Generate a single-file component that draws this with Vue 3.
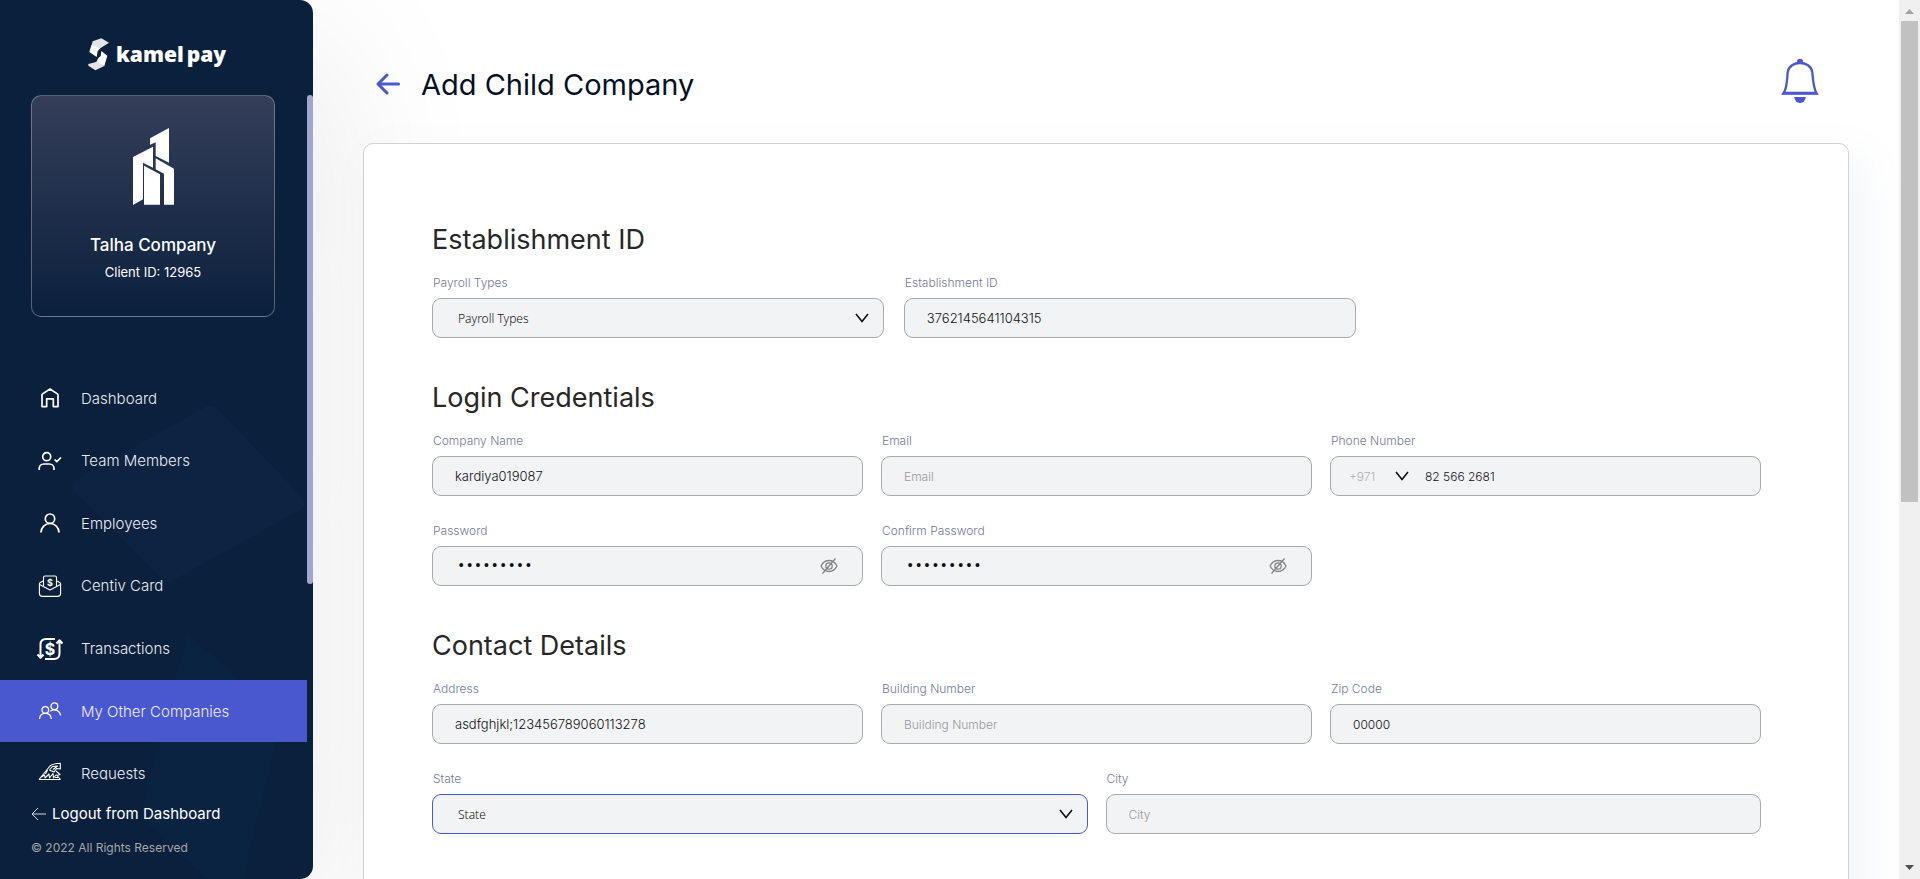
<script setup>
import { ref } from 'vue'

const navItems = [
  { label: 'Dashboard', icon: 'home' },
  { label: 'Team Members', icon: 'team' },
  { label: 'Employees', icon: 'person' },
  { label: 'Centiv Card', icon: 'card' },
  { label: 'Transactions', icon: 'transfer' },
  { label: 'My Other Companies', icon: 'companies', active: true },
  { label: 'Requests', icon: 'requests' },
]

const sections = ref([
  {
    title: 'Establishment ID',
    rows: [
      {
        layout: 'short',
        fields: [
          { id: 'payroll', label: 'Payroll Types', type: 'select' },
          { id: 'establishment', label: 'Establishment ID', type: 'text', value: '3762145641104315' },
        ],
      },
    ],
  },
  {
    title: 'Login Credentials',
    rows: [
      {
        layout: 'thirds',
        fields: [
          { id: 'company', label: 'Company Name', type: 'text', value: 'kardiya019087' },
          { id: 'email', label: 'Email', type: 'text', value: '', placeholder: 'Email' },
          { id: 'phone', label: 'Phone Number', type: 'phone', value: '82 566 2681' },
        ],
      },
      {
        layout: 'thirds',
        fields: [
          { id: 'password', label: 'Password', type: 'password', value: 'secret123' },
          { id: 'confirm', label: 'Confirm Password', type: 'password', value: 'secret123' },
        ],
      },
    ],
  },
  {
    title: 'Contact Details',
    rows: [
      {
        layout: 'thirds',
        fields: [
          { id: 'address', label: 'Address', type: 'text', value: 'asdfghjkl;123456789060113278' },
          { id: 'building', label: 'Building Number', type: 'text', value: '', placeholder: 'Building Number' },
          { id: 'zip', label: 'Zip Code', type: 'text', value: '00000', compact: true },
        ],
      },
      {
        layout: 'halves',
        fields: [
          { id: 'state', label: 'State', type: 'select', focused: true },
          { id: 'city', label: 'City', type: 'text', value: '', placeholder: 'City' },
        ],
      },
    ],
  },
])
</script>

<template>
  <div class="page">
    <aside class="sidebar">
      <svg class="backdrop" viewBox="0 0 313 879" preserveAspectRatio="none" aria-hidden="true">
        <path d="M205 407 Q212 403 218 409 L302 497 Q308 504 300 510 L172 581 Q166 584 161 578 L76 493 Q70 485 78 479Z" fill="#0e2341" />
        <path d="M187 634 L228 668 L280 730 L243 879 L207 879 L140 817Z" fill="#0a2341" />
      </svg>

      <a class="brand" href="#">
        <svg width="22" height="33" viewBox="0 0 66 99" aria-hidden="true">
          <path d="M14 10 L40 1 L63 14 L38 30 L10 24Z" fill="#e4e4e4" />
          <path d="M10 22 L38 29 L29 40 L26 57 L4 42Z" fill="#fff" />
          <path d="M40 39 L58 53 L49 84 L24 74 L31 60 L38 54Z" fill="#fff" />
          <path d="M24 72 L49 84 L22 97 L1 83 L1 78Z" fill="#e4e4e4" />
        </svg>
        <span class="brand-name"><span>kamel</span><span>pay</span></span>
      </a>

      <div class="scroller">
        <div class="scroll-content">
          <section class="company">
            <svg width="41" height="77" viewBox="399 384 123 231" fill="#fff" aria-hidden="true">
              <path d="M507 384V488L467 468V427L450 434V415Z" />
              <path d="M459 440V503L429 488V598L399 615V471Z" />
              <path d="M467 475L522 506V614H492V521L467 508Z" />
              <path d="M432 497L480 523V614H432Z" />
            </svg>
            <strong class="company-name">Talha Company</strong>
            <span class="company-id">Client ID: 12965</span>
          </section>

          <nav>
            <ul class="nav">
              <li v-for="item in navItems" :key="item.label">
                <a href="#" class="nav-link" :class="{ active: item.active }">
                  <span class="nav-icon">
                    <svg v-if="item.icon === 'home'" width="24" height="24" viewBox="0 0 24 24" class="line">
                      <path d="M4 9Q4 8.300 4.600 7.900L12 3L19.400 7.900Q20 8.300 20 9V20.600H15.300V12.800H8.700V20.600H4Z" />
                    </svg>
                    <svg v-else-if="item.icon === 'team'" width="24" height="24" viewBox="0 0 24 24" class="line">
                      <circle cx="8.700" cy="7.700" r="4" />
                      <path d="M1.200 21V19.500A4.500 4.500 0 0 1 5.700 15H11.500A4.500 4.500 0 0 1 16 19.500V21M16.600 10.500L18.800 12.700L23 8.500" />
                    </svg>
                    <svg v-else-if="item.icon === 'person'" width="24" height="24" viewBox="0 0 24 24" class="line">
                      <circle cx="12" cy="7.700" r="4.700" />
                      <path d="M3 21.500A9 9 0 0 1 21 21.500" />
                    </svg>
                    <svg v-else-if="item.icon === 'card'" width="24" height="24" viewBox="0 0 24 24" class="line thin">
                      <path d="M5.500 12V3.500Q5.500 2 7 2H17Q18.500 2 18.500 3.500V12" />
                      <path d="M5 7L2 8.800Q1.400 9.200 1.400 10V19.500Q1.400 22.400 4.500 22.400H19.500Q22.600 22.400 22.600 19.500V10Q22.600 9.200 22 8.800L19 7" />
                      <path d="M1.600 10.500L12 16L22.400 10.500" />
                      <text x="12" y="11.500" class="dollar small">$</text>
                    </svg>
                    <svg v-else-if="item.icon === 'transfer'" width="28" height="28" viewBox="0 0 28 28" class="line bold">
                      <path d="M19 4H10Q4.500 4 4.500 9.500V22M1.500 19.500L4.500 22.800L7.500 19.500M9 24H18Q23.500 24 23.500 18.500V6M20.500 8.500L23.500 5.200L26.500 8.500" />
                      <text x="14" y="19.500" class="dollar">$</text>
                    </svg>
                    <svg v-else-if="item.icon === 'companies'" width="24" height="24" viewBox="0 0 24 24" class="line medium">
                      <circle cx="7.300" cy="11" r="3.300" />
                      <path d="M1.500 20A5.900 5.900 0 0 1 13.300 20" />
                      <circle cx="16.400" cy="7.300" r="3.400" />
                      <path d="M12.300 12.200Q15.500 9.900 19 11.400Q22 13 22.700 16.400" />
                    </svg>
                    <svg v-else width="24" height="24" viewBox="0 0 24 24" class="line thin">
                      <path d="M1 17.500H22.500M1 17.500L12 4Q14.500 1.500 22.300 1.200V7L18.500 6.500L16 10L11.500 8L14.500 4.500L19.500 4L15 7.500M18 9L22 12.500L19 13.500L22.500 17.500M2.500 15.500L6.500 13L7 16L11 12L11.500 16L15 11.500L15.500 16L18.500 12.500M9.500 8L7.500 12M17 15.500L20 15.500" />
                    </svg>
                  </span>
                  <span>{{ item.label }}</span>
                </a>
              </li>
            </ul>
          </nav>
        </div>
        <div class="side-track"><div class="side-thumb"></div></div>
      </div>

      <footer class="side-footer">
        <a class="logout" href="#">
          <svg width="15" height="14" viewBox="0 0 15 14" aria-hidden="true">
            <path d="M15 7H1M7 1L1 7L7 13" fill="none" stroke="#d5d9e2" stroke-width="1" />
          </svg>
          Logout from Dashboard
        </a>
        <small class="copyright">© 2022 All Rights Reserved</small>
      </footer>
    </aside>

    <main class="main">
      <header class="header">
        <button class="icon-button" type="button" aria-label="Back">
          <svg width="24" height="22" viewBox="0 0 24 22">
            <path d="M22.500 11H2M11 2L2 11L11 20" fill="none" stroke="#4a58d0" stroke-width="3" stroke-linecap="round" stroke-linejoin="round" />
          </svg>
        </button>
        <h1>Add Child Company</h1>
        <button class="icon-button bell" type="button" aria-label="Notifications">
          <svg width="38" height="44" viewBox="243 177 114 132">
            <path d="M251 279C262 262 261 238 263 217C266 198 283 189 300 189C317 189 334 198 337 217C339 240 340 262 349 279Z" fill="none" stroke="#4a58d0" stroke-width="7" />
            <path d="M243 284L251 276H349L357 284Z" fill="#4a58d0" />
            <path d="M291 190V184A9 8 0 0 1 309 184V190Z" fill="#4a58d0" />
            <path d="M283 291H317A17 18 0 0 1 283 291Z" fill="#4a58d0" />
          </svg>
        </button>
      </header>

      <form class="panel" @submit.prevent>
        <section v-for="section in sections" :key="section.title" class="section">
          <h2>{{ section.title }}</h2>
          <div class="rows">
            <div v-for="(row, i) in section.rows" :key="i" class="row" :class="row.layout">
              <div v-for="field in row.fields" :key="field.id" class="field">
                <label :for="field.id">{{ field.label }}</label>

                <div v-if="field.type === 'select'" class="control" :class="{ focused: field.focused }">
                  <select :id="field.id">
                    <option>{{ field.label }}</option>
                  </select>
                  <svg class="chevron" width="14" height="10" viewBox="0 0 14 10" aria-hidden="true">
                    <path d="M1 1L7 8.500L13 1" />
                  </svg>
                </div>

                <div v-else-if="field.type === 'phone'" class="control">
                  <div class="prefix">
                    <select aria-label="Country code">
                      <option>+971</option>
                    </select>
                    <svg class="chevron" width="14" height="10" viewBox="0 0 14 10" aria-hidden="true">
                      <path d="M1 1L7 8.500L13 1" />
                    </svg>
                  </div>
                  <input :id="field.id" v-model="field.value" class="phone compact" type="tel" />
                </div>

                <div v-else-if="field.type === 'password'" class="control">
                  <input :id="field.id" v-model="field.value" class="secret" type="password" />
                  <button class="eye" type="button" aria-label="Show password">
                    <svg width="18" height="16" viewBox="0 0 18 16">
                      <path d="M1 8C3 4 6 2.500 9 2.500S15 4 17 8C15 12 12 13.500 9 13.500S3 12 1 8ZM15.500 0.500L2.500 15.500" />
                      <ellipse cx="9" cy="8" rx="3.200" ry="3.200" />
                    </svg>
                  </button>
                </div>

                <div v-else class="control">
                  <input
                    :id="field.id"
                    v-model="field.value"
                    type="text"
                    :class="{ compact: field.compact }"
                    :placeholder="field.placeholder"
                  />
                </div>
              </div>
            </div>
          </div>
        </section>
      </form>
    </main>

    <div class="page-track" aria-hidden="true">
      <svg width="9" height="5" viewBox="0 0 9 5"><path d="M0 5L4.500 0L9 5Z" fill="#a3a3a3" /></svg>
      <div class="page-rail"><div class="page-thumb"></div></div>
      <svg width="9" height="5" viewBox="0 0 9 5"><path d="M0 0L4.500 5L9 0Z" fill="#505050" /></svg>
    </div>
  </div>
</template>

<style>
body {
  margin: 0;
}
</style>

<style scoped>
* {
  box-sizing: border-box;
}

.page {
  display: flex;
  height: 100vh;
  overflow: hidden;
  background: #fff;
  font-family: Inter, 'Open Sans', sans-serif;
}

.sidebar {
  position: relative;
  display: flex;
  flex-direction: column;
  flex: none;
  width: 313px;
  border-radius: 0 13px 13px 0;
  background: #0b203d;
  color: #fff;
  box-shadow: 24px 42px 160px rgba(0, 0, 0, 0.08);
}

.backdrop {
  position: absolute;
  inset: 0;
  width: 100%;
  height: 100%;
}

.brand {
  position: relative;
  display: flex;
  align-items: center;
  gap: 6px;
  height: 95px;
  padding: 13px 0 0 88px;
  color: #fff;
  text-decoration: none;
}

.brand-name {
  display: flex;
  gap: 3px;
  font-family: 'Open Sans', sans-serif;
  font-size: 21px;
  font-weight: 800;
  line-height: 30px;
}

.scroller {
  position: relative;
  display: flex;
  flex: 1;
  min-height: 0;
}

.scroll-content {
  flex: 1;
  overflow: hidden;
}

.side-track {
  width: 6px;
}

.side-thumb {
  height: 71.400%;
  border-radius: 3px;
  background: #a2a6cf;
}

.company {
  display: flex;
  flex-direction: column;
  align-items: center;
  height: 222px;
  margin: 0 32px 0 31px;
  padding-top: 32px;
  border: 1px solid rgba(255, 255, 255, 0.3);
  border-radius: 10px;
  background: linear-gradient(#343e59, #0b203d);
}

.company-name {
  margin-top: 28px;
  font-size: 17px;
  font-weight: 500;
  line-height: 24px;
}

.company-id {
  margin-top: 5px;
  font-size: 13px;
  line-height: 20px;
}

.nav {
  display: grid;
  grid-auto-rows: 1fr;
  height: 438px;
  margin: 50px 0 0;
  padding: 0;
  list-style: none;
}

.nav-link {
  display: flex;
  align-items: center;
  gap: 17px;
  height: 100%;
  padding-left: 36px;
  color: #e9ecf2;
  font-size: 15px;
  font-weight: 300;
  text-decoration: none;
}

.nav-link.active {
  background: #4a58d0;
}

.nav-icon {
  display: flex;
  justify-content: center;
  width: 28px;
}

.line {
  fill: none;
  stroke: #fff;
  stroke-width: 1.700;
  stroke-linejoin: round;
}

.line.thin {
  stroke-width: 1.100;
}

.line.medium {
  stroke-width: 1.300;
}

.line.bold {
  stroke-width: 2;
}

.dollar {
  fill: #fff;
  stroke: none;
  font-size: 16px;
  font-weight: 700;
  text-anchor: middle;
}

.dollar.small {
  font-size: 9px;
}

.side-footer {
  position: relative;
  display: flex;
  flex-direction: column;
  gap: 12px;
  height: 99px;
  padding: 23px 31px 0;
}

.logout {
  display: flex;
  align-items: center;
  gap: 6px;
  color: #fff;
  font-size: 15px;
  line-height: 22px;
  text-decoration: none;
}

.copyright {
  color: #a4a7ac;
  font-size: 12px;
  line-height: 22px;
}

.main {
  position: relative;
  display: flex;
  flex-direction: column;
  flex: 1;
  min-width: 0;
  overflow: hidden;
  padding: 59px 50px 0;
}

.header {
  display: flex;
  flex: none;
  align-items: flex-start;
  height: 84px;
  padding: 0 30px 0 13px;
}

.icon-button {
  display: flex;
  align-items: center;
  height: 50px;
  padding: 0;
  border: 0;
  background: none;
}

.bell {
  height: 44px;
  margin-left: auto;
}

h1 {
  margin: 0 0 0 21px;
  color: #041027;
  font-size: 29px;
  font-weight: 400;
  line-height: 52px;
}

.panel {
  display: flex;
  flex: none;
  flex-direction: column;
  gap: 43px;
  padding: 79px 87px 80px 68px;
  border: 1px solid #d1d1d1;
  border-radius: 10px;
  background: #fff;
  box-shadow: 14px 17px 40px 4px rgba(112, 144, 176, 0.08);
}

h2 {
  margin: 0 0 15px;
  color: #272727;
  font-size: 27px;
  font-weight: 400;
  line-height: 34px;
}

.rows {
  display: grid;
  gap: 24px;
}

.row {
  display: grid;
  gap: 18px;
}

.short {
  grid-template-columns: 34% 34%;
  gap: 20px;
}

.thirds {
  grid-template-columns: repeat(3, 1fr);
}

.halves {
  grid-template-columns: repeat(2, 1fr);
}

label {
  display: block;
  margin-bottom: 4px;
  padding-left: 1px;
  color: #74799b;
  font-size: 12px;
  font-weight: 300;
  line-height: 22px;
}

.control {
  position: relative;
  display: flex;
  align-items: center;
  height: 40px;
  overflow: hidden;
  border: 1px solid #a9a9a9;
  border-radius: 9px;
  background: #f2f3f5;
}

.control.focused {
  border-color: #4a58d0;
}

input,
select {
  flex: 1;
  width: 100%;
  min-width: 0;
  height: 100%;
  margin: 0;
  padding: 0 22px;
  border: 0;
  outline: 0;
  background: none;
  color: #111;
  font-family: Inter, 'Open Sans', sans-serif;
  font-size: 13px;
  font-weight: 300;
}

input::placeholder {
  color: #999;
  font-size: 12px;
  opacity: 1;
}

input.compact {
  font-size: 12px;
}

select {
  padding: 0 40px 0 25px;
  appearance: none;
  font-family: 'Noto Sans', sans-serif;
  font-size: 12px;
}

.chevron {
  position: absolute;
  right: 14px;
  fill: none;
  stroke: #111;
  stroke-width: 1.600;
  pointer-events: none;
}

.prefix {
  position: relative;
  display: flex;
  align-items: center;
  width: 78px;
  height: 100%;
}

.prefix select {
  padding: 0 0 0 18px;
  color: #b0b0b0;
  font-family: Inter, 'Open Sans', sans-serif;
}

.prefix .chevron {
  right: 0;
}

input.phone {
  padding-left: 16px;
}

input.secret {
  padding-left: 24px;
  color: #111;
  font-family: 'Liberation Mono', monospace;
  font-size: 14px;
  font-weight: 400;
}

.eye {
  display: flex;
  padding: 0;
  margin-right: 24px;
  border: 0;
  background: none;
}

.eye svg {
  fill: none;
  stroke: #858585;
  stroke-width: 1.300;
}

.page-track {
  z-index: 1;
  display: flex;
  flex: none;
  flex-direction: column;
  align-items: center;
  gap: 7px;
  width: 21px;
  padding: 9px 0;
  background: #f0f0f0;
}

.page-rail {
  flex: 1;
  width: 17px;
}

.page-thumb {
  height: 57.500%;
  background: #c1c1c1;
}
</style>
